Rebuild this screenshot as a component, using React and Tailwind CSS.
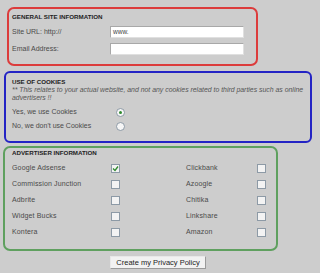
import React from "react";

function Check({ checked }) {
  return (
    <div className="w-[9px] h-[9px] border border-[#8d9aa6] bg-[#f3f3f3] flex items-center justify-center">
      {checked && (
        <svg width="7" height="7" viewBox="0 0 7 7">
          <path d="M1 3.5 L3 5.5 L6 1.5" stroke="#2f8a2f" strokeWidth="1.3" fill="none" />
        </svg>
      )}
    </div>
  );
}

function Radio({ checked }) {
  return (
    <div className="w-[9px] h-[9px] rounded-full border border-[#8d9aa6] bg-[#f6f6f6] flex items-center justify-center">
      {checked && <div className="w-[3px] h-[3px] rounded-full bg-[#2f8a2f]" />}
    </div>
  );
}

const left = [
  ["Google Adsense", true],
  ["Commission Junction", false],
  ["Adbrite", false],
  ["Widget Bucks", false],
  ["Kontera", false],
];
const right = ["Clickbank", "Azoogle", "Chitika", "Linkshare", "Amazon"];

export default function App() {
  return (
    <div className="w-[320px] h-[273px] bg-[#cdcdcd] pt-[7px] overflow-hidden font-['Liberation_Sans',Arial,sans-serif] text-[#4a4a4a]">
      <div className="ml-[7px] w-[251px] h-[59px] border-2 border-[#dc3c3c] rounded-[7px] pl-[3px]">
        <div className="pt-[3px] text-[6.2px] leading-[10px] font-bold text-[#222]">GENERAL SITE INFORMATION</div>
        <div className="mt-[4px] flex items-center h-[12px]">
          <div className="w-[98px] text-[7px]">Site URL: http://</div>
          <div className="w-[134px] h-[12px] bg-white border border-[#a8a8a8] border-b-[#e0e0e0] border-r-[#e0e0e0] text-[6.5px] leading-[10px] pl-[2px] text-[#444]">www.</div>
        </div>
        <div className="mt-[5px] flex items-center h-[12px]">
          <div className="w-[98px] text-[7px]">Email Address:</div>
          <div className="w-[134px] h-[12px] bg-white border border-[#a8a8a8] border-b-[#e0e0e0] border-r-[#e0e0e0]" />
        </div>
      </div>

      <div className="mt-[5px] ml-[4px] w-[308px] h-[72px] border-2 border-[#2323c4] rounded-[6px] pl-[6px]">
        <div className="pt-[4px] text-[6.2px] leading-[9px] font-bold text-[#222]">USE OF COOKIES</div>
        <div className="text-[6.9px] leading-[8px] italic text-[#555] whitespace-nowrap">
          ** This relates to your actual website, and not any cookies related to third parties such as online
          <br />
          advertisers !!
        </div>
        <div className="mt-[3px] flex items-center h-[14px]">
          <div className="w-[104px] text-[7px]">Yes, we use Cookies</div>
          <Radio checked />
        </div>
        <div className="flex items-center h-[14px]">
          <div className="w-[104px] text-[7px]">No, we don't use Cookies</div>
          <Radio />
        </div>
      </div>

      <div className="mt-[3px] ml-[3px] w-[275px] h-[105px] border-2 border-[#5fa05f] rounded-[7px] pl-[7px]">
        <div className="text-[6.2px] leading-[10px] font-bold text-[#222]">ADVERTISER INFORMATION</div>
        <div className="mt-[2px] flex">
          <div className="w-[174px] flex flex-col">
            {left.map(([n, c]) => (
              <div key={n} className="flex items-center h-[16px]">
                <div className="w-[99px] text-[7px] tracking-[0.15px]">{n}</div>
                <Check checked={c} />
              </div>
            ))}
          </div>
          <div className="flex flex-col">
            {right.map((n) => (
              <div key={n} className="flex items-center h-[16px]">
                <div className="w-[71px] text-[7px] tracking-[0.15px]">{n}</div>
                <Check />
              </div>
            ))}
          </div>
        </div>
      </div>

      <div className="mt-[5px] ml-[110px] w-[96px] h-[13px] bg-[#f2f2f2] border border-[#9a9a9a] border-t-[#e8e8e8] border-l-[#e8e8e8] flex items-center justify-center text-[7.5px] text-[#222]">
        Create my Privacy Policy
      </div>
    </div>
  );
}
